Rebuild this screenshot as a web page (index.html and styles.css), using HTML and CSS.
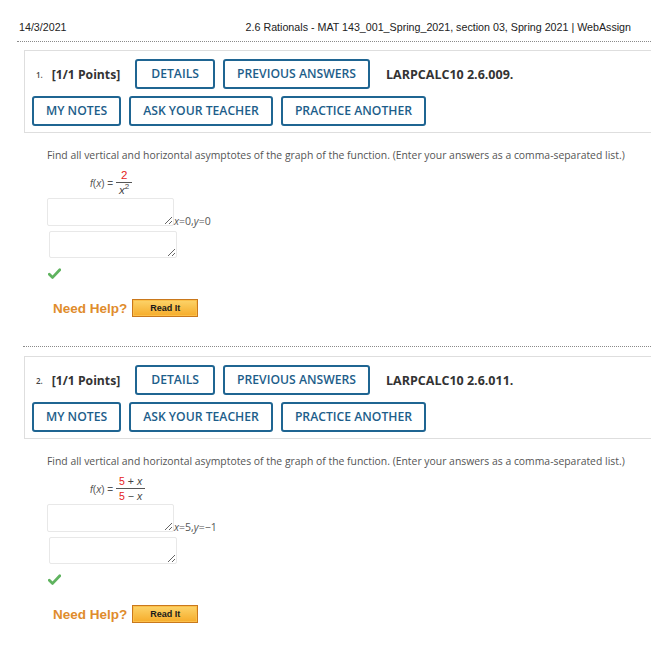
FILE: index.html
```html
<!DOCTYPE html>
<html lang="en">
<head>
<meta charset="utf-8">
<title>2.6 Rationals - MAT 143_001_Spring_2021, section 03, Spring 2021 | WebAssign</title>
<link rel="stylesheet" href="styles.css">
</head>
<body>
<div class="page-head">
  <span>14/3/2021</span>
  <span>2.6 Rationals - MAT 143_001_Spring_2021, section 03, Spring 2021 | WebAssign</span>
</div>

<section class="question">
  <div class="qbar">
    <div class="row">
      <span class="qnum">1.</span>
      <span class="points">[1/1 Points]</span>
      <button class="btn btn-details">DETAILS</button>
      <button class="btn">PREVIOUS ANSWERS</button>
      <span class="code">LARPCALC10 2.6.009.</span>
    </div>
    <div class="row">
      <button class="btn">MY NOTES</button>
      <button class="btn">ASK YOUR TEACHER</button>
      <button class="btn">PRACTICE ANOTHER</button>
    </div>
  </div>
  <div class="qbody">
    <p class="prompt">Find all vertical and horizontal asymptotes of the graph of the function. (Enter your answers as a comma-separated list.)</p>
    <div class="func">
      <span class="fx"><i>f</i>(<i>x</i>) =</span>
      <span class="frac">
        <span class="num"><span class="red">2</span></span>
        <span class="den"><i>x</i><sup>2</sup></span>
      </span>
    </div>
    <div class="answer">
      <textarea class="ta ta1"></textarea><span class="ans"><i>x</i>=0,<i>y</i>=0</span>
    </div>
    <textarea class="ta ta2"></textarea>
    <div class="check"><svg width="13" height="11" viewBox="0 0 13 11"><path d="M1.3 6.2 L4.6 9.4 L11.8 1.8" fill="none" stroke="#5fb35f" stroke-width="2.8" stroke-linecap="round" stroke-linejoin="round"/></svg></div>
    <div class="help"><span class="need">Need Help?</span><span class="readit">Read It</span></div>
  </div>
</section>

<div class="sep"></div>

<section class="question">
  <div class="qbar">
    <div class="row">
      <span class="qnum">2.</span>
      <span class="points">[1/1 Points]</span>
      <button class="btn btn-details">DETAILS</button>
      <button class="btn">PREVIOUS ANSWERS</button>
      <span class="code">LARPCALC10 2.6.011.</span>
    </div>
    <div class="row">
      <button class="btn">MY NOTES</button>
      <button class="btn">ASK YOUR TEACHER</button>
      <button class="btn">PRACTICE ANOTHER</button>
    </div>
  </div>
  <div class="qbody">
    <p class="prompt">Find all vertical and horizontal asymptotes of the graph of the function. (Enter your answers as a comma-separated list.)</p>
    <div class="func">
      <span class="fx"><i>f</i>(<i>x</i>) =</span>
      <span class="frac frac-wide">
        <span class="num"><span class="red">5</span> + <i>x</i></span>
        <span class="den"><span class="red">5</span> − <i>x</i></span>
      </span>
    </div>
    <div class="answer">
      <textarea class="ta ta1"></textarea><span class="ans"><i>x</i>=5,<i>y</i>=−1</span>
    </div>
    <textarea class="ta ta2"></textarea>
    <div class="check"><svg width="13" height="11" viewBox="0 0 13 11"><path d="M1.3 6.2 L4.6 9.4 L11.8 1.8" fill="none" stroke="#5fb35f" stroke-width="2.8" stroke-linecap="round" stroke-linejoin="round"/></svg></div>
    <div class="help"><span class="need">Need Help?</span><span class="readit">Read It</span></div>
  </div>
</section>
</body>
</html>
```

FILE: styles.css
```css
html, body {
  margin: 0;
  padding: 0;
  background: #fff;
}
body {
  overflow: hidden;
  font-family: "Open Sans", "Liberation Sans", sans-serif;
  color: #333;
}
.page-head {
  display: flex;
  justify-content: space-between;
  margin-left: 17px;
  padding: 21px 20px 7px 2px;
  font-family: "Liberation Sans", Arial, sans-serif;
  font-size: 10.7px;
  line-height: 13px;
  color: #222;
  border-bottom: 1px dotted #8a8a8a;
}
.question {
  margin-left: 24px;
}
.page-head + .question {
  margin-top: 8px;
}
.qbar {
  border: 1px solid #dedede;
  border-right: none;
  padding: 8px 0 6px 7px;
  display: flex;
  flex-direction: column;
  gap: 7px;
}
.row {
  display: flex;
  align-items: center;
  gap: 8px;
}
.qnum {
  font-size: 8px;
  font-weight: 600;
  color: #444;
  margin-left: 4px;
}
.points {
  font-size: 12.2px;
  font-weight: 700;
  color: #333;
  margin-left: 1px;
  margin-right: 7px;
}
.btn {
  box-sizing: border-box;
  height: 30px;
  padding: 0 12px;
  border: 2px solid #1f6592;
  border-radius: 3px;
  background: #fff;
  color: #1d5e8a;
  font-family: "Open Sans", sans-serif;
  font-size: 12.2px;
  font-weight: 600;
  line-height: 26px;
}
.btn-details {
  padding: 0 14px;
}
.code {
  font-size: 12.5px;
  font-weight: 700;
  color: #333;
  margin-left: 8px;
}
.qbody {
  padding-left: 23px;
}
.prompt {
  margin: 15px 0 0;
  font-size: 10.4px;
  line-height: 14px;
  color: #555;
}
.func {
  display: flex;
  align-items: center;
  margin: 7px 0 0 43px;
  gap: 3px;
}
.fx {
  font-family: "Liberation Sans", Arial, sans-serif;
  font-size: 10px;
  color: #555;
}
.frac {
  display: inline-flex;
  flex-direction: column;
  align-items: stretch;
  text-align: center;
  font-family: "Liberation Sans", Arial, sans-serif;
  font-size: 11.5px;
  color: #444;
}
.frac-wide {
  font-size: 10.5px;
}
.num {
  padding: 0 3px;
  line-height: 13px;
  border-bottom: 1px solid #555;
}
.den {
  padding: 0 3px;
  line-height: 14px;
}
.den sup {
  font-size: 8px;
  line-height: 0;
  vertical-align: 5px;
}
.red {
  color: #e52222;
}
.answer {
  display: flex;
  align-items: flex-end;
  margin-top: 1px;
}
.ta {
  box-sizing: border-box;
  display: block;
  height: 28px;
  margin: 0;
  border: 1px solid #e8e8e8;
  border-radius: 2px;
  background: #fff;
}
.ta1 {
  width: 127px;
}
.ta2 {
  width: 128px;
  height: 27px;
  margin: 5px 0 0 2px;
}
.ans {
  font-size: 10.5px;
  color: #555;
  line-height: 11px;
  margin-bottom: -1px;
}
.check {
  margin: 10px 0 0 1px;
  height: 11px;
}
.check svg {
  display: block;
}
.help {
  display: flex;
  align-items: center;
  gap: 5px;
  margin: 20px 0 0 6px;
}
.need {
  font-family: "Liberation Sans", Arial, sans-serif;
  font-size: 13.5px;
  font-weight: 700;
  color: #e08c2c;
}
.readit {
  box-sizing: border-box;
  width: 66px;
  height: 18px;
  border: 1px solid #c9781c;
  background: linear-gradient(#fcd46a, #f6ac2a);
  box-shadow: inset 0 0 0 1px #fbc04a;
  font-family: "Liberation Sans", Arial, sans-serif;
  font-size: 9px;
  font-weight: 700;
  color: #1a1a1a;
  text-align: center;
  line-height: 16px;
}
.sep {
  margin: 29px 0 9px 23px;
  border-top: 1px dotted #8a8a8a;
}
```
